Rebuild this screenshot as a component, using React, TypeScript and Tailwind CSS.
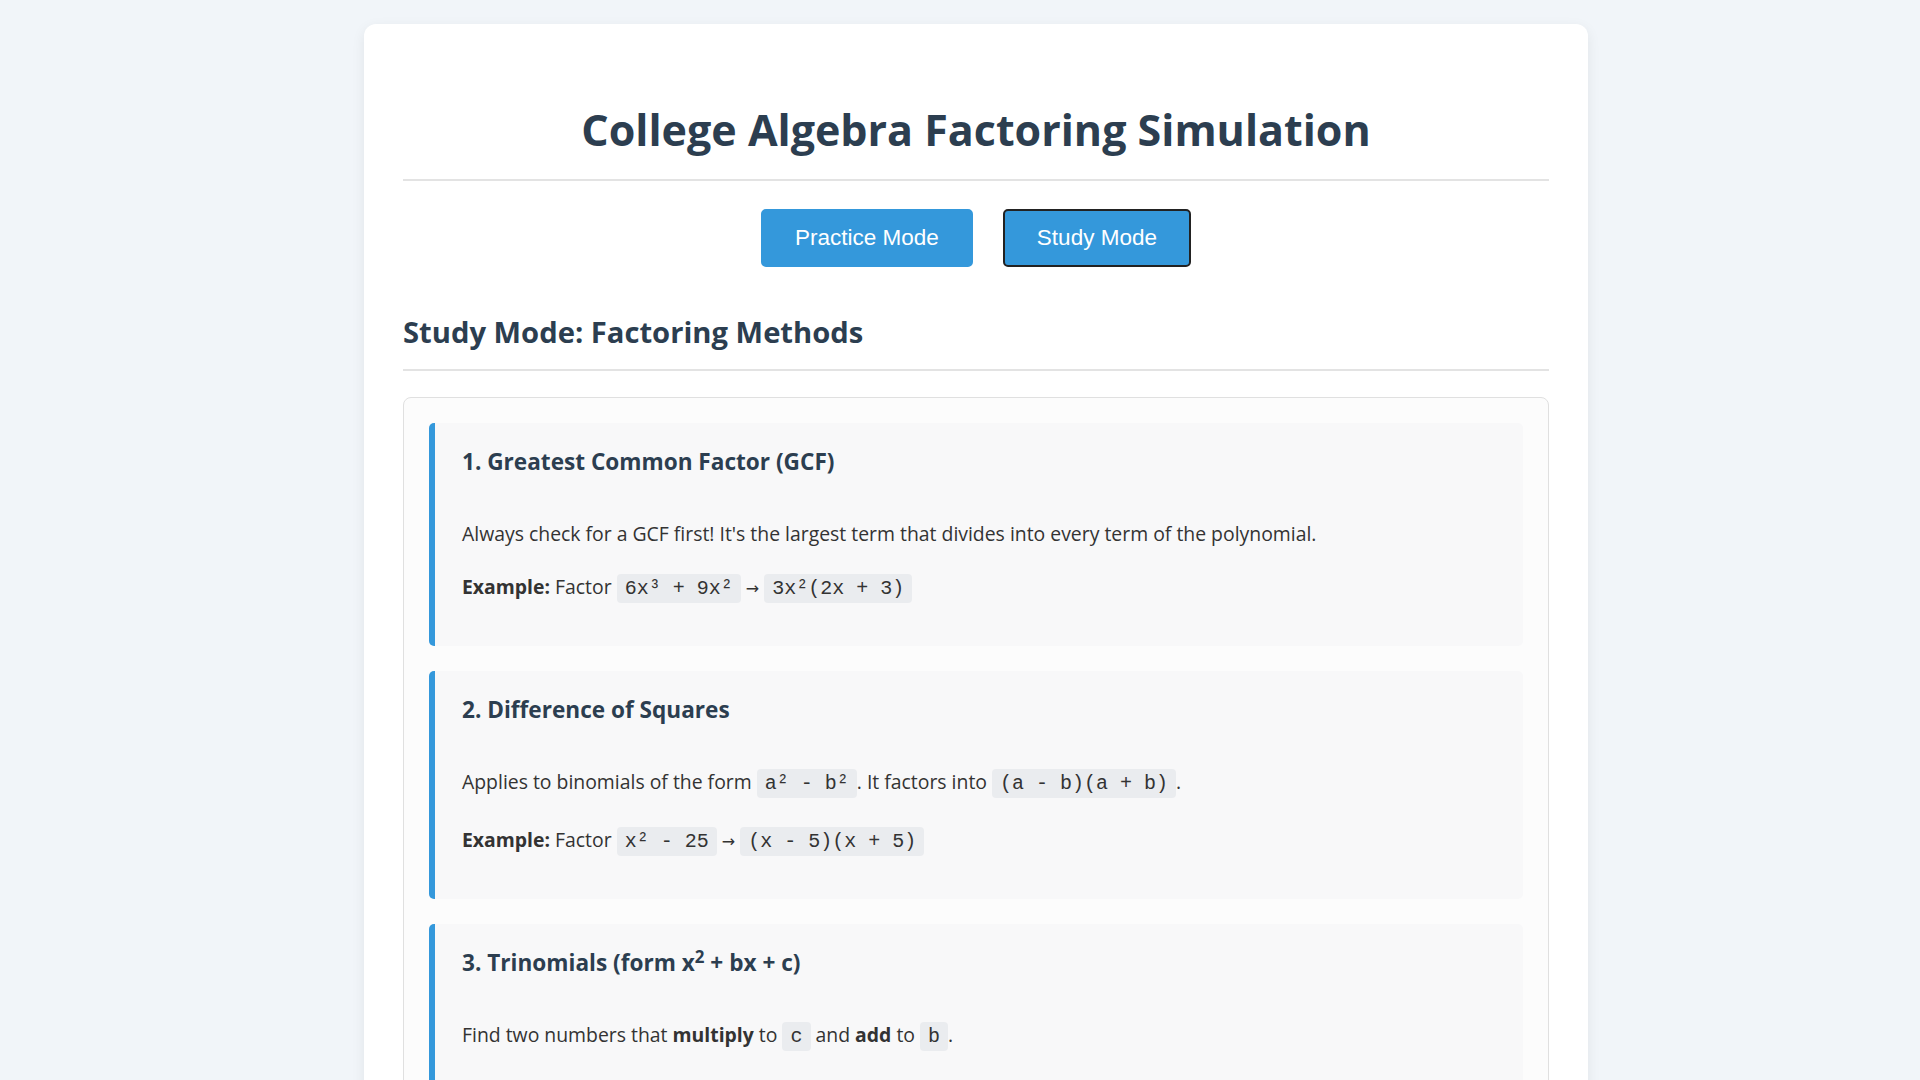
import React from "react";

function Code({ children }: { children: React.ReactNode }) {
  return (
    <code className="font-['Liberation_Mono','Courier_New',monospace] text-[20px] leading-[36px] bg-[#eaecef] text-[#333] rounded-[4px] px-[8px] py-[3px]">
      {children}
    </code>
  );
}

function Arrow() {
  return <span className="font-['DejaVu_Sans',sans-serif] text-[16px]">→</span>;
}

function Block({ title, children }: { title: React.ReactNode; children: React.ReactNode }) {
  return (
    <div className="bg-[#f8f8f9] border-l-[6px] border-[#3498db] rounded-[5px] pl-[27px] pr-[27px] pt-[25px] pb-[39px]">
      <h3 className="text-[22.6px] leading-[28px] font-bold text-[#2c3e50] mb-[42px]">{title}</h3>
      <div className="flex flex-col gap-[22px] text-[19.4px] leading-[1.6] text-[#333]">{children}</div>
    </div>
  );
}

export default function App() {
  return (
    <div className="min-h-screen bg-[#f1f5f9] pt-[24px] font-['Open_Sans',sans-serif]">
      <div className="ml-[364px] w-[1224px] bg-white rounded-[12px] shadow-[0_4px_14px_rgba(0,0,0,0.07)] px-[39px] pt-[80px] pb-[40px]">
        <h1 className="text-center text-[43px] leading-[52px] font-bold text-[#2c3e50] pb-[23px] border-b-2 border-[#e3e3e3]">
          College Algebra Factoring Simulation
        </h1>
        <div className="flex justify-center gap-[30px] mt-[28px]">
          <button className="font-['Liberation_Sans',Arial,sans-serif] text-[22.5px] leading-[26px] text-white bg-[#3498db] border-2 border-[#3498db] rounded-[5px] px-[32px] py-[14px]">
            Practice Mode
          </button>
          <button className="font-['Liberation_Sans',Arial,sans-serif] text-[22.5px] leading-[26px] text-white bg-[#3498db] border-2 border-[#222] rounded-[5px] px-[32px] py-[14px]">
            Study Mode
          </button>
        </div>
        <h2 className="mt-[47px] text-[29.2px] leading-[36px] font-bold text-[#2c3e50] pb-[19px] border-b-2 border-[#e3e3e3]">
          Study Mode: Factoring Methods
        </h2>
        <div className="mt-[26px] border border-[#e0e0e0] rounded-[8px] bg-[#fcfcfc] p-[25px] flex flex-col gap-[25px]">
          <Block title="1. Greatest Common Factor (GCF)">
            <p>Always check for a GCF first! It's the largest term that divides into every term of the polynomial.</p>
            <p>
              <strong>Example:</strong> Factor <Code>6x³ + 9x²</Code> <Arrow /> <Code>3x²(2x + 3)</Code>
            </p>
          </Block>
          <Block title="2. Difference of Squares">
            <p>
              Applies to binomials of the form <Code>a² - b²</Code>. It factors into <Code>(a - b)(a + b)</Code>.
            </p>
            <p>
              <strong>Example:</strong> Factor <Code>x² - 25</Code> <Arrow /> <Code>(x - 5)(x + 5)</Code>
            </p>
          </Block>
          <Block
            title={
              <>
                3. Trinomials (form x<sup>2</sup> + bx + c)
              </>
            }
          >
            <p>
              Find two numbers that <strong>multiply</strong> to <Code>c</Code> and <strong>add</strong> to <Code>b</Code>.
            </p>
            <p>
              <strong>Example:</strong> Factor <Code>x² + 5x + 6</Code> <Arrow /> <Code>(x + 2)(x + 3)</Code>
            </p>
            <p>Since 2 × 3 = 6 and 2 + 3 = 5, the factors are (x + 2) and (x + 3).</p>
          </Block>
        </div>
      </div>
    </div>
  );
}
